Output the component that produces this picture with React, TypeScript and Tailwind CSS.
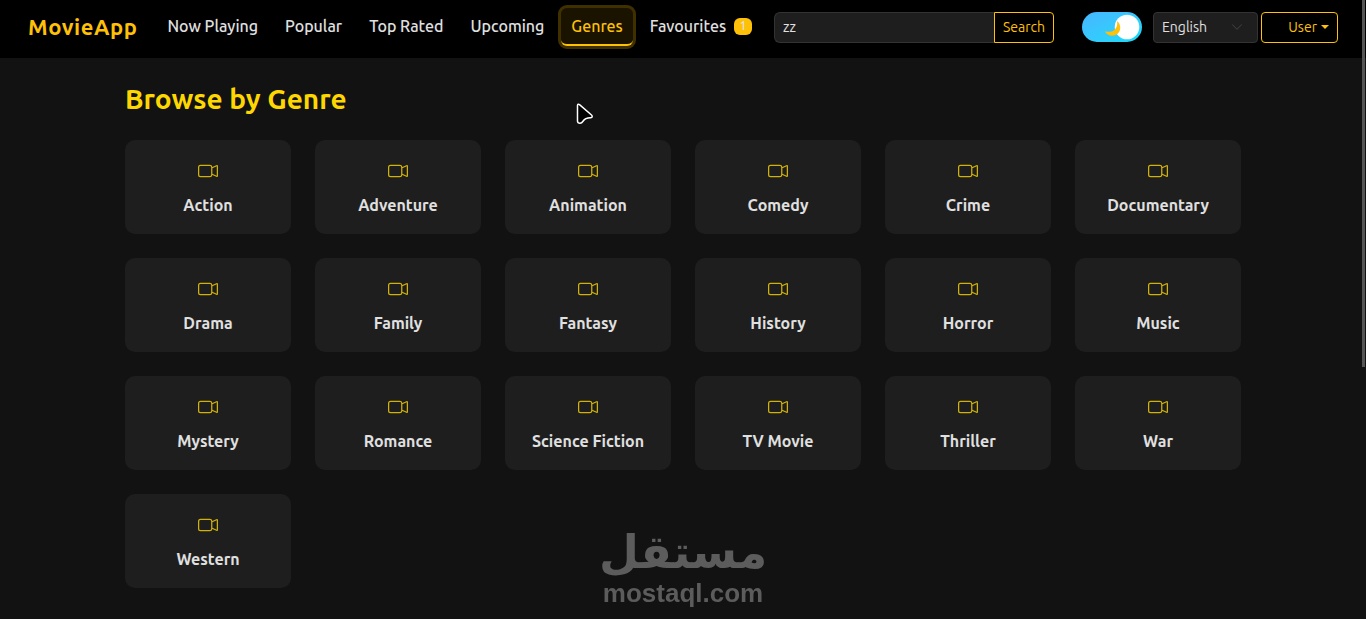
import { useState } from "react";
import { BsCameraVideo, BsChevronDown } from "react-icons/bs";

const genres = [
  "Action",
  "Adventure",
  "Animation",
  "Comedy",
  "Crime",
  "Documentary",
  "Drama",
  "Family",
  "Fantasy",
  "History",
  "Horror",
  "Music",
  "Mystery",
  "Romance",
  "Science Fiction",
  "TV Movie",
  "Thriller",
  "War",
  "Western",
];

const links = ["Now Playing", "Popular", "Top Rated", "Upcoming", "Genres", "Favourites"];

function NavLinks({ active }: { active: string }) {
  return (
    <nav className="flex items-center gap-[7px] text-base font-medium whitespace-nowrap">
      {links.map((label) => (
        <a
          key={label}
          href="#"
          aria-current={label === active ? "page" : undefined}
          className={`flex h-[38px] items-center rounded-md border-b-2 px-2.5 ${
            label === active
              ? "border-[#ffc107] bg-[#1a1300] text-[#ffc107] ring-3 ring-[#403000]"
              : "border-transparent text-[#e0e0e0]"
          }`}
        >
          {label}
          {label === "Favourites" && (
            <span className="ml-2 flex h-[17px] w-[18px] items-center justify-center rounded-md bg-[#ffc107] text-xs text-[#e0e0e0]">
              1
            </span>
          )}
        </a>
      ))}
    </nav>
  );
}

function SearchForm() {
  const [query, setQuery] = useState("zz");

  return (
    <form className="ml-auto flex h-[31px] text-sm" onSubmit={(e) => e.preventDefault()}>
      <input
        type="text"
        aria-label="Search movies"
        value={query}
        onChange={(e) => setQuery(e.target.value)}
        className="w-[220px] rounded-l-md border border-r-0 border-[#333] bg-[#1e1e1e] px-2 text-[#e0e0e0] outline-none"
      />
      <button type="submit" className="w-[60px] rounded-r-sm border border-[#ffc107] text-[#ffc107]">
        Search
      </button>
    </form>
  );
}

function ThemeToggle() {
  const [dark, setDark] = useState(true);

  return (
    <button
      type="button"
      role="switch"
      aria-checked={dark}
      aria-label="Dark mode"
      onClick={() => setDark(!dark)}
      className="ml-7 h-[30px] w-[60px] shrink-0 rounded-full bg-linear-to-br from-[#47b5ff] to-[#0fdcfa]"
    >
      <svg viewBox="0 0 60 30" className="h-full w-full" aria-hidden="true">
        <circle cx={dark ? 45 : 15} cy="15" r="12.3" fill="#fff" />
        <path
          d="M35 9c4.600 3.600 4.500 11.300-1.300 14-4 1.800-8.700.5-10.900-3.700 3.600.9 7.300.7 9.700-1.400 2.400-2.200 3.200-5.500 2.500-8.900z"
          fill="#ffc107"
        />
      </svg>
    </button>
  );
}

function Header() {
  return (
    <header className="flex h-[58px] items-center bg-black px-7 pb-1">
      <a href="#" className="mr-5 text-[22px] leading-8 font-bold tracking-wide text-[#ffc107]">
        MovieApp
      </a>
      <NavLinks active="Genres" />
      <SearchForm />
      <ThemeToggle />
      <div className="relative ml-[11px] text-sm">
        <select
          aria-label="Language"
          defaultValue="en"
          className="h-[31px] w-[105px] appearance-none rounded-sm border border-[#333] bg-[#1e1e1e] px-2 text-[#e0e0e0]"
        >
          <option value="en">English</option>
          <option value="ar">العربية</option>
        </select>
        <BsChevronDown className="pointer-events-none absolute top-[9px] right-[15px] size-3 text-[#444]" />
      </div>
      <button
        type="button"
        className="ml-[3px] flex h-[31px] w-[77px] items-center justify-end gap-1 rounded-sm border border-[#ffc107] pr-2 text-sm text-[#ffc107]"
      >
        User
        <span className="border-x-4 border-t-4 border-x-transparent border-t-[#ffc107]" />
      </button>
    </header>
  );
}

function GenreCard({ name }: { name: string }) {
  return (
    <a
      href="#"
      className="flex h-[94px] flex-col items-center rounded-[10px] bg-[#1e1e1e] pt-[21px] font-semibold text-[#e0e0e0]"
    >
      <BsCameraVideo className="size-5 text-[#ffd700] opacity-80" />
      <span className="mt-3 leading-6">{name}</span>
    </a>
  );
}

function Watermark() {
  return (
    <div className="pointer-events-none fixed bottom-3 left-1/2 flex -translate-x-1/2 flex-col items-center font-bold text-[#5c5c5c]">
      <span lang="ar" dir="rtl" className="font-['DejaVu_Sans',sans-serif] text-[46px] leading-[54px]">
        مستقل
      </span>
      <span className="font-['Liberation_Sans',sans-serif] text-[26px] leading-7">mostaql.com</span>
    </div>
  );
}

export default function App() {
  return (
    <div className="min-h-screen bg-[#121212] font-['Ubuntu','Noto_Sans',sans-serif]">
      <Header />
      <main className="mx-auto max-w-[1140px] px-3 pt-6">
        <h1 className="mb-6 text-[28px] leading-[34px] font-bold text-[#ffd700]">Browse by Genre</h1>
        <div className="grid grid-cols-6 gap-6">
          {genres.map((name) => (
            <GenreCard key={name} name={name} />
          ))}
        </div>
      </main>
      <Watermark />
      <div className="fixed top-0 right-px h-[367px] w-[3px] bg-[#555]" />
      <svg
        viewBox="0 0 18 22"
        className="pointer-events-none fixed top-[103px] left-[576px] h-[22px] w-[18px]"
        aria-hidden="true"
      >
        <path
          d="M1.500 2.500c0-1.300 1-1.600 2-.8l12 10.300c1.300 1.200.8 2.600-.8 2.800-3.400.2-5.500.2-7.500 3.200-.8 1.200-1.800 2.300-3.200 2.300-1.700 0-2.500-.8-2.500-2.300z"
          fill="#000"
          stroke="#fff"
          strokeWidth="1.500"
        />
      </svg>
    </div>
  );
}
